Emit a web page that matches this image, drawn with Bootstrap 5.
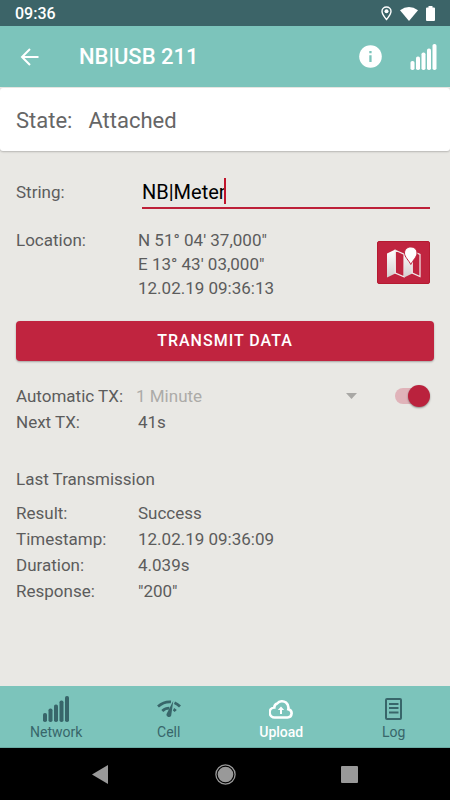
<!DOCTYPE html>
<html lang="en">
<head>
<meta charset="utf-8">
<meta name="viewport" content="width=device-width, initial-scale=1">
<title>NB|USB 211</title>
<link href="https://cdn.jsdelivr.net/npm/bootstrap@5.3.0/dist/css/bootstrap.min.css" rel="stylesheet">
<style>
  body { font-family: Roboto, "Liberation Sans", sans-serif; font-size: 17px; line-height: 26px; background: #e9e8e4; color: #5c5c5c; }
  svg { display: block; flex: none; }
  .status-bar { height: 26px; background: #3c6468; color: #fff; font-size: 16px; font-weight: 500; line-height: 24px; padding: 1px 15px 0; }
  .app-bar { height: 61px; background: #7cc4bb; color: #fff; padding: 0 13px 0 20px; }
  .app-title { font-size: 22px; font-weight: 500; line-height: 28px; margin-left: 40px; }
  .signal { margin-left: 28px; }
  .state-card { font-size: 22px; line-height: 28px; padding: 19px 16px 16px; margin-top: 1px; border-radius: 3px; box-shadow: 0 1px 2px rgba(0,0,0,.22); color: #666; }
  .content { padding: 24px 16px 0; }
  .field-label { width: 122px; flex: none; }
  .text-line { border: 0; border-bottom: 2px solid #bd2038; border-radius: 0; background: transparent; color: #000; font-size: 20px; line-height: 28px; padding: 3px 0 1px; width: 100%; outline: 0; }
  .caret { left: 82px; top: 3px; width: 2px; height: 26px; background: #c0142c; }
  .location-row { margin-top: 19px; line-height: 24px; }
  .map-btn { width: 53px; height: 43px; background: #c0243f; border: 1px solid #b51a30; border-radius: 2px; }
  .send-btn { height: 40px; background: #c0243f; color: #fff; font-size: 16px; font-weight: 500; letter-spacing: 1px; border: 0; border-radius: 4px; box-shadow: 0 1px 2px rgba(0,0,0,.3); margin: 21px 0 22px; width: 100%; }
  .send-btn:hover { background: #a91f37; color: #fff; }
  .interval-label { width: 120px; flex: none; }
  .interval { appearance: none; border: 0; background: transparent; color: #acaba8; opacity: 1; padding: 0; line-height: 26px; height: 26px; width: 100%; }
  .arrow { right: 0; top: 10px; pointer-events: none; }
  .toggle { appearance: none; position: relative; width: 34px; height: 16px; border-radius: 8px; background: #e0b3b9; margin: 0 5px 0 38px; flex: none; }
  .toggle::after { content: ""; position: absolute; right: -1px; top: -3px; width: 22px; height: 22px; border-radius: 50%; background: #ba223d; box-shadow: 0 1px 2px rgba(0,0,0,.4); }
  .section-title { margin: 31px 0 8px; font-size: 17px; line-height: 26px; font-weight: 400; }
  .tab-bar { height: 62px; background: #7cc4bb; border-bottom: 1px solid #6aaba3; }
  .tab-item { color: #38666a; font-size: 14px; line-height: 18px; text-decoration: none; padding-top: 8px; }
  .tab-item.active { color: #fff; font-weight: 500; }
  .tab-icon { height: 29px; }
  .system-bar { height: 52px; background: #000; padding: 0 38px; }
  .system-bar button { background: none; border: 0; padding: 8px; }
</style>
<script src="https://cdn.jsdelivr.net/npm/bootstrap@5.3.0/dist/js/bootstrap.bundle.min.js"></script>
</head>
<body class="d-flex flex-column min-vh-100">
<svg width="0" height="0" class="position-absolute" aria-hidden="true">
  <symbol id="bars" viewBox="0 0 26 26">
    <g fill="currentColor"><rect x="0" y="17" width="4" height="9" rx="1.8"/><rect x="5.500" y="12.500" width="4" height="13.500" rx="1.800"/><rect x="11" y="8.500" width="4" height="17.500" rx="1.800"/><rect x="16.500" y="4.500" width="4" height="21.500" rx="1.800"/><rect x="22" y="0" width="4" height="26" rx="1.800"/></g>
  </symbol>
</svg>
<div class="status-bar d-flex align-items-center justify-content-between">
  <span>09:36</span>
  <div class="d-flex align-items-center gap-2">
    <svg width="11" height="15" viewBox="0 0 11 15"><path d="M5.500 1C3 1 1 2.900 1 5.300c0 3.100 4.500 8.200 4.500 8.200S10 8.400 10 5.300C10 2.900 8 1 5.500 1z" fill="none" stroke="#fff" stroke-width="1.400"/><circle cx="5.500" cy="5.300" r="2" fill="#fff"/></svg>
    <svg width="18" height="14" viewBox="0 0 18 14"><path d="M0 3.200Q9-3 18 3.200L9 14z" fill="#fff"/></svg>
    <svg width="9" height="15" viewBox="0 0 9 15"><path d="M2.500 0h4v1.500H8q1 0 1 1V14q0 1-1 1H1q-1 0-1-1V2.500q0-1 1-1h1.500z" fill="#fff"/></svg>
  </div>
</div>
<header class="app-bar d-flex align-items-center">
  <a href="#" aria-label="Back"><svg width="19" height="18" viewBox="0 0 19 18"><path d="M18.500 9H2M10 1 2 9l8 8" fill="none" stroke="#fff" stroke-width="2"/></svg></a>
  <h1 class="app-title mb-0">NB|USB 211</h1>
  <a href="#" class="ms-auto" aria-label="Information"><svg width="23" height="23" viewBox="0 0 23 23"><circle cx="11.500" cy="11.500" r="11.300" fill="#fff"/><path d="M10.300 6h2.300v2.300h-2.300zM10.300 10.300h2.300V17h-2.300z" fill="#7cc4bb"/></svg></a>
  <svg class="signal" width="27" height="26"><use href="#bars"/></svg>
</header>
<section class="state-card bg-white d-flex gap-3"><span>State:</span><span>Attached</span></section>
<main class="content flex-grow-1">
  <form>
    <div class="d-flex align-items-center">
      <label for="payload" class="field-label">String:</label>
      <div class="position-relative flex-grow-1 ms-1 me-1">
        <input id="payload" class="text-line" type="text" value="NB|Meter">
        <span class="caret position-absolute"></span>
      </div>
    </div>
    <div class="location-row d-flex">
      <div class="field-label">Location:</div>
      <div>N 51° 04' 37,000"<br>E 13° 43' 03,000"<br>12.02.19 09:36:13</div>
      <button type="button" class="map-btn ms-auto me-1 p-0 d-flex align-items-center justify-content-center align-self-end mb-3" aria-label="Show on map">
        <svg width="34" height="31" viewBox="0 0 34 31">
          <defs><linearGradient id="paper" x1="0" y1="0" x2="0" y2="1"><stop offset="0" stop-color="#fff"/><stop offset="1" stop-color="#d4d0d0"/></linearGradient></defs>
          <path d="M0 6.500 8.300 2.500V26.500L0 30.500z" fill="url(#paper)"/>
          <path d="M8.300 3.200 17 7.200V29.800L8.300 26z" fill="none" stroke="#f0eaea" stroke-width="1.200"/>
          <path d="M17 7 25.300 3V26.500L17 30.500z" fill="url(#paper)"/>
          <path d="M25.300 4 33 7.500V29.500L25.300 26z" fill="#c0243f" stroke="#f0eaea" stroke-width="1.200"/>
          <path d="M23.800 0C20 0 17.500 2.700 17.500 6c0 4 4.500 7.500 6.300 11.500C25.600 13.500 30 10 30 6c0-3.300-2.500-6-6.200-6z" fill="#fff" stroke="#c0243f" stroke-width="1"/>
        </svg>
      </button>
    </div>
    <button type="button" class="btn send-btn p-0">TRANSMIT DATA</button>
    <div class="d-flex align-items-center">
      <label for="interval" class="interval-label text-nowrap">Automatic TX:</label>
      <div class="position-relative flex-grow-1">
        <select id="interval" class="interval" disabled><option>1 Minute</option></select>
        <svg class="arrow position-absolute" width="11" height="6" viewBox="0 0 11 6"><path d="M0 0h11L5.500 6z" fill="#a9a8a5"/></svg>
      </div>
      <input class="toggle" id="auto" type="checkbox" role="switch" aria-label="Automatic TX" checked>
    </div>
    <div class="d-flex"><div class="field-label">Next TX:</div><div>41s</div></div>
  </form>
  <h2 class="section-title">Last Transmission</h2>
  <div class="d-flex"><div class="field-label">Result:</div><div>Success</div></div>
  <div class="d-flex"><div class="field-label">Timestamp:</div><div>12.02.19 09:36:09</div></div>
  <div class="d-flex"><div class="field-label">Duration:</div><div>4.039s</div></div>
  <div class="d-flex"><div class="field-label">Response:</div><div>"200"</div></div>
</main>
<nav class="tab-bar row g-0 text-center">
  <a href="#" class="tab-item col d-flex flex-column align-items-center"><span class="tab-icon d-flex align-items-center"><svg width="26" height="26"><use href="#bars"/></svg></span>Network</a>
  <a href="#" class="tab-item col d-flex flex-column align-items-center"><span class="tab-icon d-flex align-items-center"><svg width="24" height="18" viewBox="0 0 24 18"><g fill="none" stroke="currentColor" stroke-width="2.800"><path d="M1 6.500Q7 1.300 14 1.900M17.500 2.700Q20.500 4 23 6.500"/><path d="M5.300 11Q8.300 8.200 12.300 8.200M16.500 9.200Q17.800 9.900 18.700 11"/></g><path d="M16.300.8 14.200 15.400a2.500 2.500 0 0 1-4.800-1.200z" fill="currentColor"/></svg></span>Cell</a>
  <a href="#" class="tab-item active col d-flex flex-column align-items-center" aria-current="page"><span class="tab-icon d-flex align-items-center"><svg width="24" height="20" viewBox="0 0 24 20"><path d="M6 18.500h12.500a4.200 4.200 0 0 0 .8-8.300A7 7 0 0 0 17 3.500 6.500 6.500 0 0 0 8.200 4.500 4.200 4.200 0 0 0 5.300 8.500 5 5 0 0 0 6 18.500z" fill="none" stroke="#fff" stroke-width="2.600"/><path d="M12 7.500 8.800 11H11v4h2v-4h2.200z" fill="#fff"/></svg></span>Upload</a>
  <a href="#" class="tab-item col d-flex flex-column align-items-center"><span class="tab-icon d-flex align-items-center"><svg width="17" height="22" viewBox="0 0 17 22"><rect x="1" y="1" width="15" height="20" rx="1" fill="none" stroke="currentColor" stroke-width="2"/><path d="M4 6h9.500M4 10h9.500M4 14.500h9.500" stroke="currentColor" stroke-width="1.800"/></svg></span>Log</a>
</nav>
<div class="system-bar row g-0 align-items-center">
  <div class="col d-flex justify-content-center"><button type="button" aria-label="Back"><svg width="16" height="19" viewBox="0 0 16 19"><path d="M16 0v19L0 9.500z" fill="#999"/></svg></button></div>
  <div class="col d-flex justify-content-center"><button type="button" aria-label="Home"><svg width="21" height="21" viewBox="0 0 21 21"><circle cx="10.500" cy="10.500" r="7.800" fill="#999"/><circle cx="10.500" cy="10.500" r="9.600" fill="none" stroke="#999" stroke-width="1.300"/></svg></button></div>
  <div class="col d-flex justify-content-center"><button type="button" aria-label="Recent apps"><svg width="17" height="17" viewBox="0 0 17 17"><rect width="17" height="17" rx="1" fill="#999"/></svg></button></div>
</div>
</body>
</html>
